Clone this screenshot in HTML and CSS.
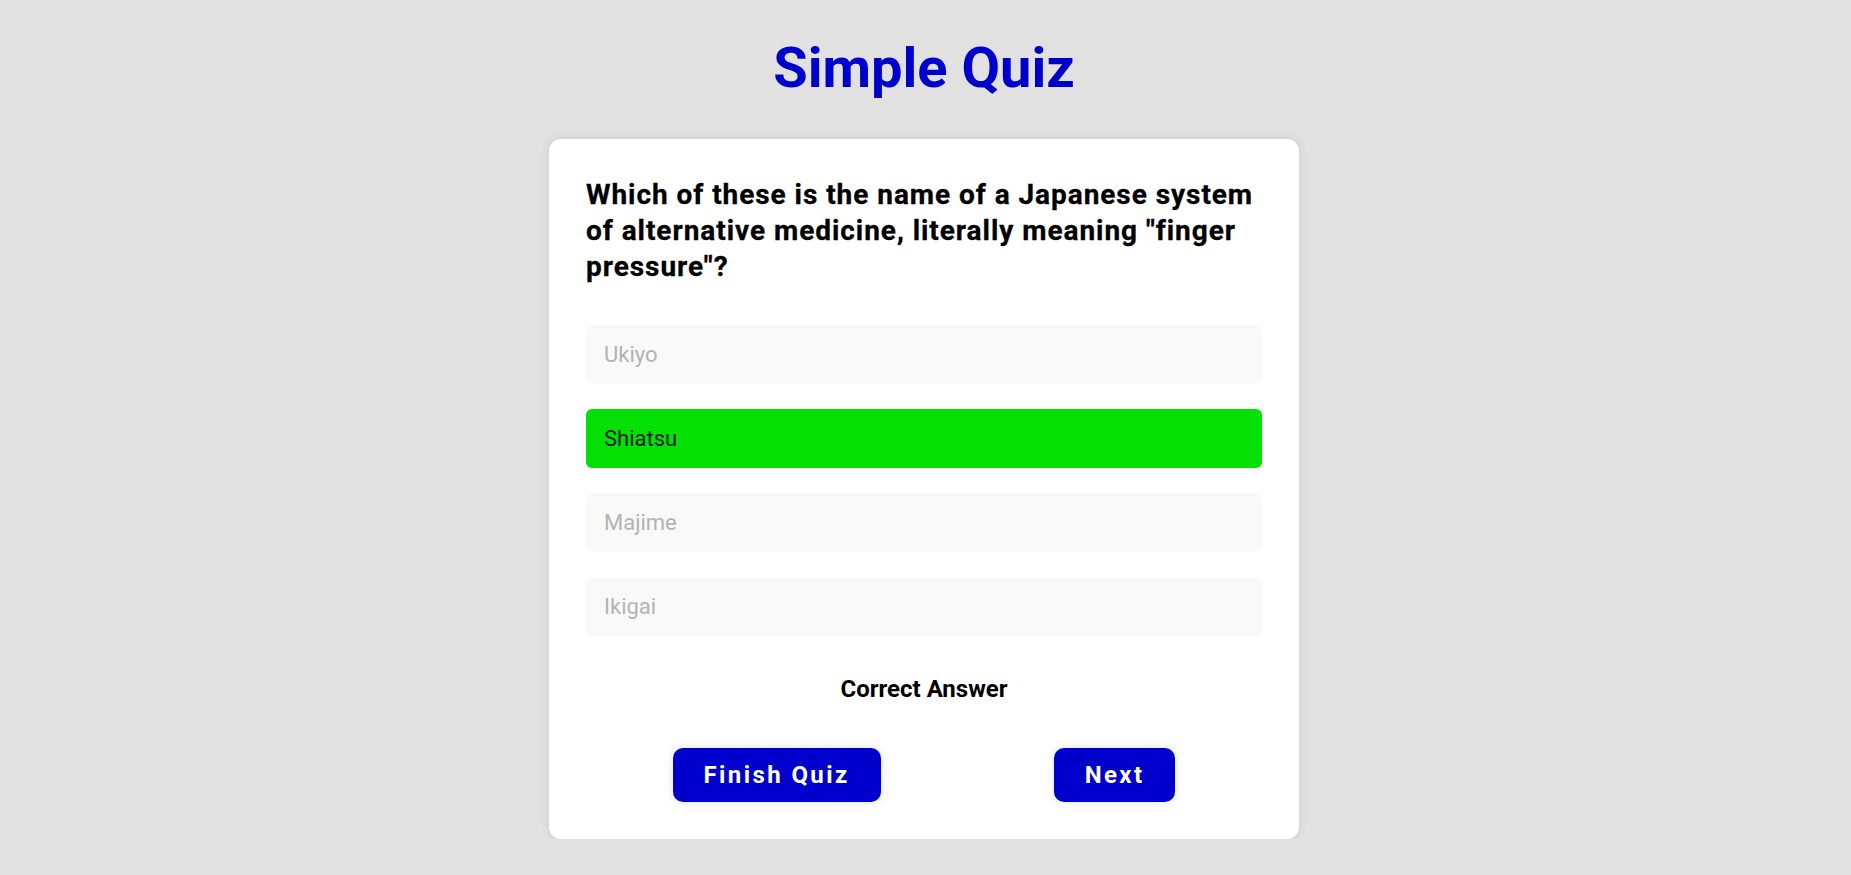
FILE: index.html
```html
<!DOCTYPE html>
<html lang="en">
<head>
<meta charset="utf-8">
<title>Simple Quiz</title>
<link rel="stylesheet" href="styles.css">
</head>
<body>
<div class="page">
  <h1 class="title">Simple Quiz</h1>
  <div class="card">
    <h2 class="question">Which of these is the name of a Japanese system of alternative medicine, literally meaning "finger pressure"?</h2>
    <div class="options">
      <div class="option">Ukiyo</div>
      <div class="option correct">Shiatsu</div>
      <div class="option">Majime</div>
      <div class="option">Ikigai</div>
    </div>
    <p class="feedback">Correct Answer</p>
    <div class="actions">
      <button class="btn">Finish Quiz</button>
      <button class="btn">Next</button>
    </div>
  </div>
</div>
</body>
</html>
```
FILE: styles.css
```css
html, body {
  margin: 0;
  padding: 0;
}
body {
  background: #e1e1e1;
  font-family: Roboto, "Noto Sans", Arial, sans-serif;
  color: #000;
}
.page {
  display: flex;
  flex-direction: column;
  align-items: center;
  padding-top: 35px;
  padding-right: 3px;
}
.title {
  margin: 0 0 38px;
  font-size: 56px;
  font-weight: 700;
  color: #0000cc;
  line-height: normal;
}
.card {
  width: 750px;
  box-sizing: border-box;
  padding: 38px 37px 37px;
  background: #fff;
  border-radius: 12px;
  box-shadow: 0 0 10px rgba(0, 0, 0, 0.1);
}
.question {
  margin: 0 0 40px;
  font-size: 28px;
  line-height: 36px;
  font-weight: 700;
  letter-spacing: 0.95px;
  -webkit-text-stroke: 0.3px #000;
}
.options {
  display: flex;
  flex-direction: column;
  gap: 25px;
}
.option {
  padding: 17px 18px;
  background: #f9f9f9;
  border-radius: 6px;
  font-size: 22px;
  line-height: normal;
  color: #b3b3b3;
}
.option.correct {
  background: #04df04;
  color: #1a1a1a;
}
.feedback {
  margin: 39px 0 0;
  text-align: center;
  font-size: 24px;
  font-weight: 700;
  line-height: normal;
}
.actions {
  margin-top: 45px;
  display: flex;
  justify-content: space-around;
}
.btn {
  padding: 13px 31px;
  font-family: inherit;
  font-size: 24px;
  font-weight: 700;
  line-height: normal;
  letter-spacing: 2.4px;
  color: #fff;
  background: #0000cc;
  border: 0;
  border-radius: 10px;
  box-shadow: 0 0 10px rgba(0, 0, 204, 0.12);
}
```
